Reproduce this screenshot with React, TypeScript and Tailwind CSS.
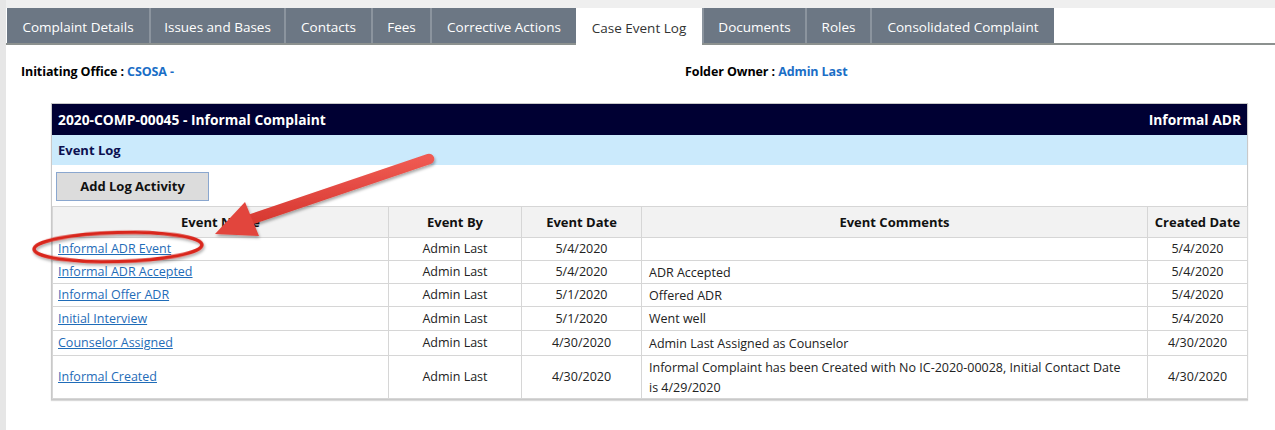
import React from "react";

const tabs: { label: string; w: string }[] = [
  { label: "Complaint Details", w: "w-[142px]" },
  { label: "Issues and Bases", w: "w-[135px]" },
  { label: "Contacts", w: "w-[87px]" },
  { label: "Fees", w: "w-[59px]" },
  { label: "Corrective Actions", w: "w-[146px]" },
  { label: "Case Event Log", w: "w-[126px]" },
  { label: "Documents", w: "w-[103px]" },
  { label: "Roles", w: "w-[65px]" },
  { label: "Consolidated Complaint", w: "w-[184px]" },
];

type Row = { name: string; by: string; date: string; comment: string; created: string; h: string };

const rows: Row[] = [
  { name: "Informal ADR Event", by: "Admin Last", date: "5/4/2020", comment: "", created: "5/4/2020", h: "h-[23px]" },
  { name: "Informal ADR Accepted", by: "Admin Last", date: "5/4/2020", comment: "ADR Accepted", created: "5/4/2020", h: "h-[23px]" },
  { name: "Informal Offer ADR", by: "Admin Last", date: "5/1/2020", comment: "Offered ADR", created: "5/4/2020", h: "h-[23px]" },
  { name: "Initial Interview", by: "Admin Last", date: "5/1/2020", comment: "Went well", created: "5/4/2020", h: "h-[24px]" },
  { name: "Counselor Assigned", by: "Admin Last", date: "4/30/2020", comment: "Admin Last Assigned as Counselor", created: "4/30/2020", h: "h-[25px]" },
  {
    name: "Informal Created",
    by: "Admin Last",
    date: "4/30/2020",
    comment: "Informal Complaint has been Created with No IC-2020-00028, Initial Contact Date is 4/29/2020",
    created: "4/30/2020",
    h: "h-[43px]",
  },
];

const font = { fontFamily: '"Open Sans", "Noto Sans", "Liberation Sans", sans-serif' };

export default function App() {
  return (
    <div className="relative w-[1275px] h-[430px] bg-white flex overflow-hidden" style={font}>
      <div className="w-[6px] h-full bg-[#e6e6e6]" />
      <div className="flex-1 flex flex-col">
        <div className="h-[8px] bg-[#efefef]" />
        {/* tab strip */}
        <div className="flex h-[37px] border-b-2 border-[#8c918f] pl-[1px]">
          {tabs.map((t, i) => {
            const active = t.label === "Case Event Log";
            return (
              <div
                key={t.label}
                className={
                  active
                    ? t.w + " h-[37px] pt-[3px] bg-white text-[#333] flex items-center justify-center whitespace-nowrap text-[13.5px]"
                    : t.w +
                      " h-full pt-[3px] bg-[#6c7784] text-white flex items-center justify-center whitespace-nowrap text-[13.5px] " +
                      (i > 0 ? "border-l-2 border-[#8b949e]" : "")
                }
              >
                {t.label}
              </div>
            );
          })}
        </div>

        {/* folder info */}
        <div className="flex h-[52px] pt-[2px] items-center text-[12.5px] font-bold tracking-[-0.1px]">
          <div className="w-[679px] pl-[15px]">
            <span className="text-black">Initiating Office : </span>
            <span className="text-[#1a6ec6]">CSOSA -</span>
          </div>
          <div>
            <span className="text-black">Folder Owner : </span>
            <span className="text-[#1a6ec6]">Admin Last</span>
          </div>
        </div>

        {/* event log panel */}
        <div className="ml-[45px] mt-[6px] w-[1197px] border border-[#c9c9c9] shadow-[0_1px_1px_rgba(0,0,0,0.15)]">
          <div className="h-[31px] pt-[2px] bg-[#000033] text-white font-bold text-[13.8px] flex items-center justify-between pl-[6px] pr-[6px]">
            <span>2020-COMP-00045 - Informal Complaint</span>
            <span>Informal ADR</span>
          </div>
          <div className="h-[30px] pt-[2px] bg-[#cbeafc] text-[#0b1050] font-bold text-[13px] flex items-center px-[6px]">
            Event Log
          </div>
          <div className="h-[41px] pt-[2px] flex items-center px-[4px]">
            <button className="w-[153px] h-[29px] bg-[#dcdcdc] border border-[#8aa7cf] text-[13px] font-bold text-[#111]">
              Add Log Activity
            </button>
          </div>
          <table className="w-[1195px] border-collapse text-[12.5px] text-[#222] table-fixed">
            <colgroup>
              <col className="w-[336px]" />
              <col className="w-[133px]" />
              <col className="w-[120px]" />
              <col className="w-[506px]" />
              <col className="w-[100px]" />
            </colgroup>
            <thead>
              <tr className="h-[31px] bg-[#f2f2f2]">
                {["Event Name", "Event By", "Event Date", "Event Comments", "Created Date"].map((h) => (
                  <th key={h} className="border border-[#d6d6d6] pt-[2px] font-bold text-[13px] text-[#111] text-center">
                    {h}
                  </th>
                ))}
              </tr>
            </thead>
            <tbody>
              {rows.map((r) => (
                <tr key={r.name} className={r.h}>
                  <td className="border border-[#d6d6d6] pl-[5px] pt-[1px]">
                    <a href="#" className="text-[#1f6cb8] underline">
                      {r.name}
                    </a>
                  </td>
                  <td className="border border-[#d6d6d6] text-center pt-[1px]">{r.by}</td>
                  <td className="border border-[#d6d6d6] text-center pt-[1px]">{r.date}</td>
                  <td className="border border-[#d6d6d6] pl-[7px] pr-[20px] pt-[1px] leading-[20px]">{r.comment}</td>
                  <td className="border border-[#d6d6d6] text-center pt-[1px]">{r.created}</td>
                </tr>
              ))}
            </tbody>
          </table>
        </div>
      </div>

      {/* callout annotation: arrow and circle */}
      <svg className="absolute left-0 top-0 pointer-events-none" width="1275" height="430" viewBox="0 0 1275 430">
        <defs>
          <filter id="shadow" x="-20%" y="-50%" width="140%" height="200%">
            <feDropShadow dx="1" dy="2" stdDeviation="1.5" floodColor="#000" floodOpacity="0.35" />
          </filter>
          <linearGradient id="arrowFill" x1="0" y1="0" x2="0" y2="1">
            <stop offset="0" stopColor="#ef5a52" />
            <stop offset="1" stopColor="#d83a33" />
          </linearGradient>
        </defs>
        <ellipse
          cx="118"
          cy="247"
          rx="84"
          ry="14.5"
          fill="none"
          stroke="#d9251d"
          strokeWidth="3.5"
          transform="rotate(-1.5 118 247)"
          filter="url(#shadow)"
        />
        <g filter="url(#shadow)">
          <line x1="429" y1="159" x2="252" y2="219" stroke="url(#arrowFill)" strokeWidth="10.5" strokeLinecap="round" />
          <polygon points="215,234 245,202 259,236" fill="#e2443c" />
        </g>
      </svg>
    </div>
  );
}
